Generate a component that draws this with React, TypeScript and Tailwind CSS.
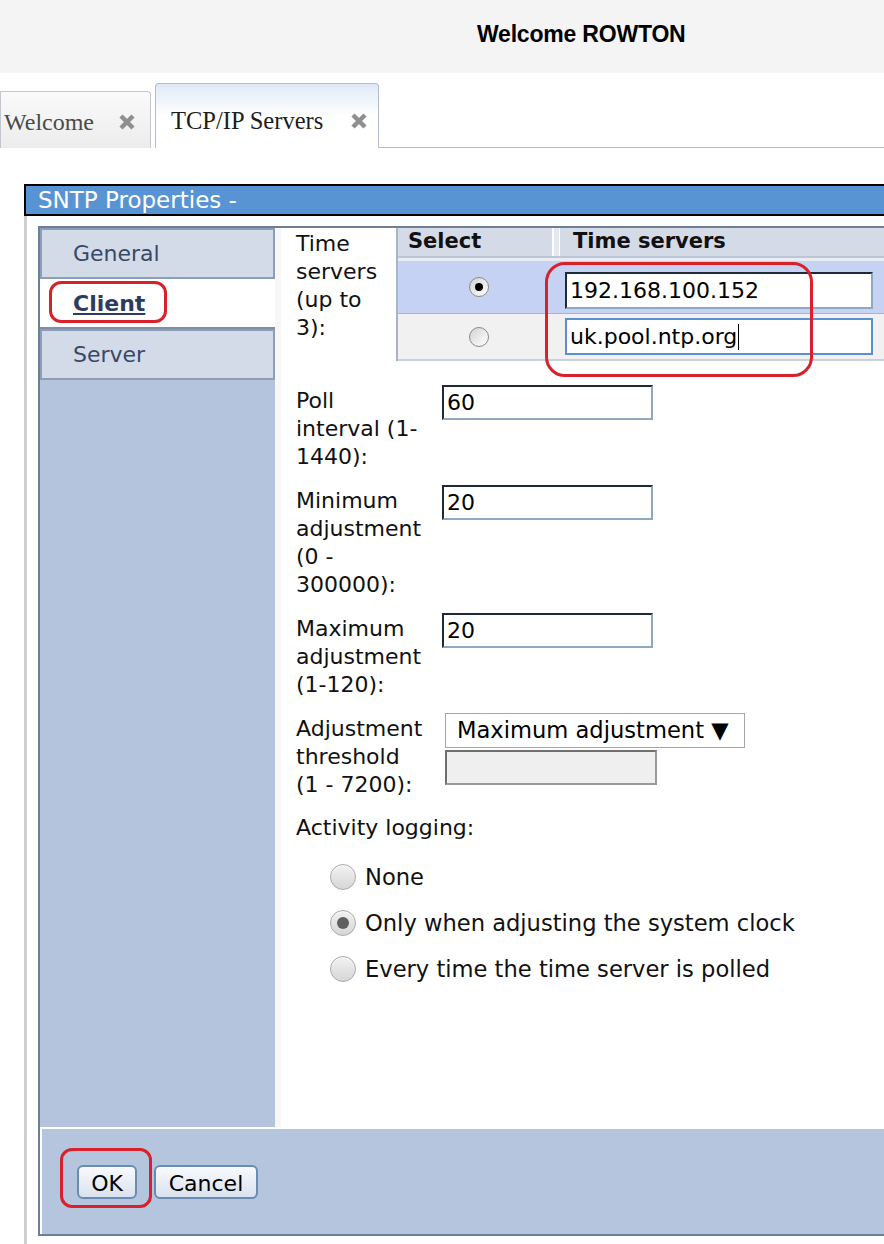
import React from 'react'

const sans = { fontFamily: '"DejaVu Sans", Verdana, sans-serif' }

function Field({ value, width = 'w-[211px]' }: { value: string; width?: string }) {
  return (
    <div
      className={`${width} h-[35px] border-2 border-t-[#1d2a39] border-l-[#1d2a39] border-b-[#8fa8c0] border-r-[#8fa8c0] bg-white pl-[3px] flex items-center text-[22px] text-black`}
    >
      {value}
    </div>
  )
}

function Label({ lines, width = 'w-[146px]' }: { lines: string[]; width?: string }) {
  return (
    <div className={`${width} shrink-0 text-[22px] leading-[28px] text-[#111] pt-[2px]`}>
      {lines.map((l) => (
        <div key={l}>{l}</div>
      ))}
    </div>
  )
}

function BigRadio({ checked }: { checked?: boolean }) {
  return (
    <div className="w-[26px] h-[26px] rounded-full border border-[#a9a9a9] bg-gradient-to-b from-[#f2f2f2] to-[#d6d6d6] flex items-center justify-center shadow-[inset_0_1px_1px_rgba(255,255,255,0.8)]">
      {checked && <div className="w-[12px] h-[12px] rounded-full bg-[#5f5f5f]" />}
    </div>
  )
}

function SmallRadio({ checked }: { checked?: boolean }) {
  return (
    <div className="w-[20px] h-[20px] rounded-full border border-[#8a8a8a] bg-gradient-to-br from-[#d4d4d4] to-white flex items-center justify-center">
      {checked && <div className="w-[8px] h-[8px] rounded-full bg-black" />}
    </div>
  )
}

function CloseX() {
  return (
    <svg width="18" height="18" viewBox="0 0 18 18" style={{ filter: 'blur(0.6px)' }}>
      <path d="M3 3 L15 15 M15 3 L3 15" stroke="#8f8f8f" strokeWidth="4.5" strokeLinecap="butt" />
    </svg>
  )
}

export default function App() {
  return (
    <div className="relative w-[884px] h-[1244px] bg-white overflow-hidden" style={sans}>
      {/* Top banner */}
      <div className="h-[73px] bg-[#f4f4f4] flex items-center pl-[477px] pb-[4px]">
        <span className="text-[23px] font-bold text-black tracking-[-0.2px]" style={{ fontFamily: '"Liberation Sans", Arial, sans-serif' }}>
          Welcome ROWTON
        </span>
      </div>

      {/* Tabs */}
      <div className="h-[75px] flex items-end" style={{ fontFamily: '"Liberation Serif", "Times New Roman", serif' }}>
        <div className="w-[151px] h-[57px] border border-b-0 border-[#c3c7cd] rounded-tr-[4px] bg-gradient-to-b from-[#fafafa] to-[#ececec] flex items-center pt-[4px] pl-[3px] gap-[24px]">
          <span className="text-[24px] text-[#4a4a4a]">Welcome</span>
          <CloseX />
        </div>
        <div className="ml-[4px] w-[224px] h-[65px] border border-b-0 border-[#b3bcc8] rounded-t-[4px] bg-gradient-to-b from-[#dfeaf7] via-white to-white flex items-center pt-[10px] pl-[15px] gap-[27px]">
          <span className="text-[24.5px] text-[#1c1c1c]">TCP/IP Servers</span>
          <CloseX />
        </div>
        <div className="flex-1 border-b border-[#b3bcc8]" />
      </div>

      {/* Dialog */}
      <div className="mt-[36px] ml-[24px]">
        <div className="h-[32px] bg-[#5894d3] border-2 border-r-0 border-black flex items-center pl-[12px]">
          <span className="text-[23px] text-white">SNTP Properties -</span>
        </div>
        <div className="border-l-[3px] border-[#cfcfcf] pl-[11px] pt-[10px] h-[1030px]">
          <div className="border-2 border-r-0 border-[#6b7f99] h-[1010px] flex flex-col">
            <div className="flex flex-1">
              {/* Sidebar */}
              <div className="w-[235px] bg-[#b4c4dd] flex flex-col">
                <div className="h-[51px] border-2 border-[#8c9db8] bg-[#d3dbe9] flex items-center pl-[31px] text-[22px] text-[#3a4866]">
                  General
                </div>
                <div className="h-[50px] bg-white border-b-2 border-[#7d8da5] flex items-center pl-[33px] text-[22px] font-bold underline text-[#2c3b5e]">
                  Client
                </div>
                <div className="h-[51px] border-2 border-[#8c9db8] bg-[#d3dbe9] flex items-center pl-[31px] text-[22px] text-[#3a4866]">
                  Server
                </div>
              </div>

              {/* Content */}
              <div className="flex-1 bg-white border-l-[6px] border-[#f7f7f7] pl-[15px] flex flex-col">
                {/* Time servers */}
                <div className="flex">
                  <Label width="w-[100px]" lines={['Time', 'servers', '(up to', '3):']} />
                  <div className="flex-1 border-l-2 border-[#a7b5c9]">
                    <div className="h-[30px] bg-[#d4dbe7] flex items-center border-b-2 border-[#bcc6d4]">
                      <div className="w-[162px] h-full flex items-center justify-between pl-[10px]">
                        <span className="text-[21px] font-bold text-[#111]">Select</span>
                        <div className="w-[8px] h-[28px] border-l-2 border-white border-r border-[#9aa6b6] bg-[#e4e8ef]" />
                      </div>
                      <span className="pl-[13px] text-[21px] font-bold text-[#111]">Time servers</span>
                    </div>
                    <div className="h-[3px] bg-[#e9edf3]" />
                    <div className="h-[53px] bg-[#c5d2f4] flex items-center border-b border-[#aab4c2]">
                      <div className="w-[162px] flex justify-center">
                        <SmallRadio checked />
                      </div>
                      <div className="pl-[5px] pt-[6px]">
                        <div className="w-[308px] h-[37px] border-2 border-t-[#1d2a39] border-l-[#1d2a39] border-b-[#8fa8c0] border-r-[#8fa8c0] bg-white pl-[3px] flex items-center text-[22px] text-black">
                          192.168.100.152
                        </div>
                      </div>
                    </div>
                    <div className="h-[47px] bg-[#f1f1f1] flex items-center border-b-2 border-[#c8d0dc]">
                      <div className="w-[162px] flex justify-center">
                        <SmallRadio />
                      </div>
                      <div className="pl-[5px]">
                        <div className="w-[308px] h-[37px] border-2 border-[#5a8fd3] bg-white pl-[3px] flex items-center text-[22px] text-black">
                          uk.pool.ntp.org<span className="inline-block w-[1px] h-[26px] bg-black ml-[1px]" />
                        </div>
                      </div>
                    </div>
                  </div>
                </div>

                {/* Poll interval */}
                <div className="flex mt-[24px]">
                  <Label lines={['Poll', 'interval (1-', '1440):']} />
                  <Field value="60" />
                </div>

                <div className="flex mt-[14px]">
                  <Label lines={['Minimum', 'adjustment', '(0 -', '300000):']} />
                  <Field value="20" />
                </div>

                <div className="flex mt-[14px]">
                  <Label lines={['Maximum', 'adjustment', '(1-120):']} />
                  <Field value="20" />
                </div>

                <div className="flex mt-[14px]">
                  <Label width="w-[149px]" lines={['Adjustment', 'threshold', '(1 - 7200):']} />
                  <div className="flex flex-col gap-[2px]">
                    <div className="w-[300px] h-[35px] border border-[#a6a6a6] bg-white flex items-center pl-[11px] text-[22.6px] text-black">
                      Maximum adjustment ▼
                    </div>
                    <div className="w-[212px] h-[35px] border-2 border-t-[#6f6f6f] border-l-[#6f6f6f] border-b-[#9a9a9a] border-r-[#9a9a9a] bg-[#efefef]" />
                  </div>
                </div>

                <div className="mt-[15px] text-[22px] leading-[28px] text-[#111]">Activity logging:</div>

                <div className="flex flex-col gap-[20px] mt-[22px] pl-[34px] text-[22.6px] leading-[26px] text-[#111]">
                  <div className="flex items-center gap-[9px]">
                    <BigRadio />
                    <span>None</span>
                  </div>
                  <div className="flex items-center gap-[9px]">
                    <BigRadio checked />
                    <span>Only when adjusting the system clock</span>
                  </div>
                  <div className="flex items-center gap-[9px]">
                    <BigRadio />
                    <span>Every time the time server is polled</span>
                  </div>
                </div>
              </div>
            </div>

            {/* Footer */}
            <div className="h-[107px] bg-[#b5c5de] border-t-2 border-l-2 border-white flex items-center pl-[35px] gap-[17px]">
              <button className="w-[60px] h-[34px] rounded-[6px] border-2 border-[#6a8bb2] bg-gradient-to-b from-[#f8fafd] to-[#d9e2ee] text-[22px] text-black">
                OK
              </button>
              <button className="w-[104px] h-[34px] rounded-[6px] border-2 border-[#6a8bb2] bg-gradient-to-b from-[#f8fafd] to-[#d9e2ee] text-[22px] text-black">
                Cancel
              </button>
            </div>
          </div>
        </div>
      </div>

      {/* Red annotations */}
      <div className="absolute left-[545px] top-[262px] w-[268px] h-[115px] border-[3px] border-[#d9202b] rounded-[20px]" />
      <div className="absolute left-[49px] top-[281px] w-[118px] h-[42px] border-[3px] border-[#d9202b] rounded-[12px]" />
      <div className="absolute left-[60px] top-[1148px] w-[92px] h-[60px] border-[3px] border-[#d9202b] rounded-[12px]" />
    </div>
  )
}
